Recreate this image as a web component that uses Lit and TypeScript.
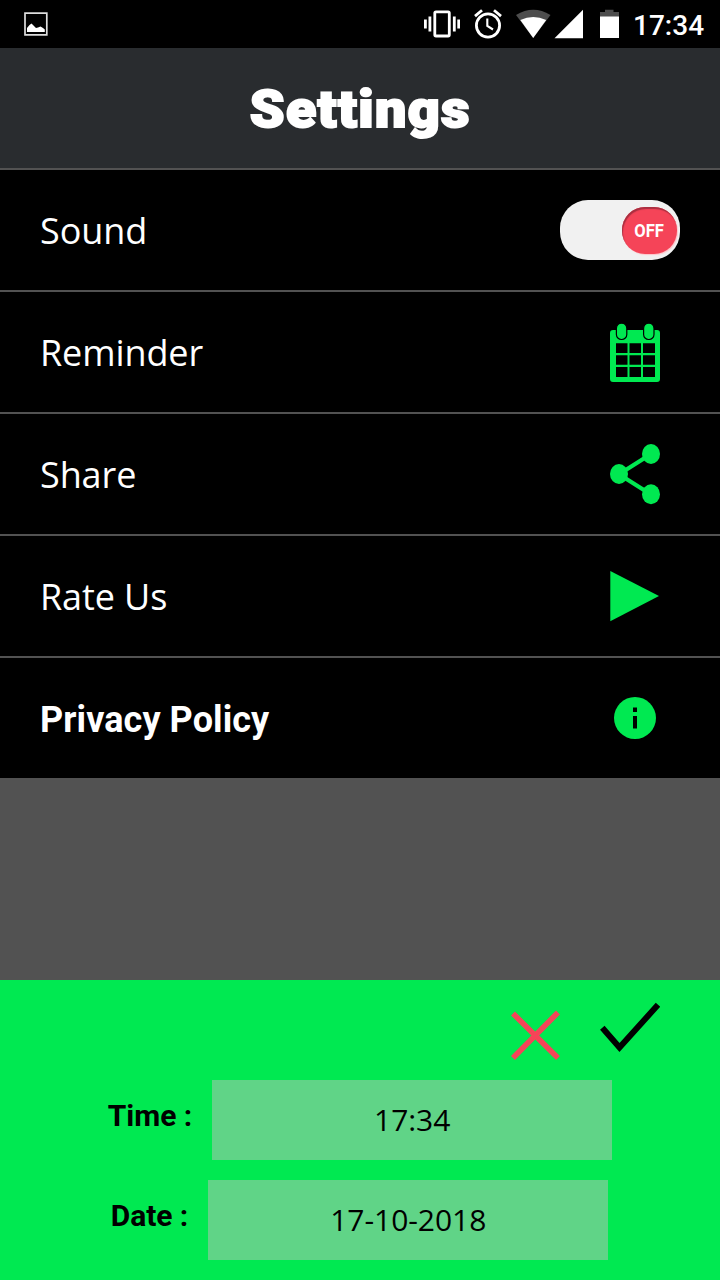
import { LitElement, html, css, svg } from "lit";
import { customElement, property } from "lit/decorators.js";

@customElement("status-bar")
class StatusBar extends LitElement {
  @property() time = "";

  static styles = css`
    :host { display: flex; height: 48px; box-sizing: border-box; padding: 0 16px 0 24px;
      background: #000; color: #fff; justify-content: space-between; }
    svg { display: block; height: 48px; }
    .right { display: flex; }
    .vibrate { margin-right: 14px; }
    .alarm { margin-right: 14px; }
    .wifi { margin-right: 3px; }
    .signal { margin-right: 15px; }
    .battery { margin-right: 14px; }
    .time { font: 500 28px/51px Roboto, sans-serif; width: 71px; white-space: nowrap; }
  `;

  render() {
    return html`
      <svg width="24" viewBox="0 0 24 48">
        <path d="M1 13.1H22.8V34.8H1Z" fill="none" stroke="#ddd" stroke-width="1.7" />
        <path d="M3 32V28L5.5 25L7.5 23.5L9.5 25.5L12 28L14 27.5L16.5 26.5L19 28L20.8 29.5V32Z" fill="#fff" />
      </svg>
      <div class="right">
        <svg class="vibrate" width="36" viewBox="0 0 36 48" fill="none" stroke="#fff">
          <rect x="10.8" y="11.8" width="14.5" height="24.2" rx="1.2" stroke-width="2.8" />
          <path d="M1.4 19.5V28.5M5.9 16.5V31.5M30.3 16.5V31.5M34.7 19.5V28.5" stroke-width="2.8" />
        </svg>
        <svg class="alarm" width="28" viewBox="0 0 28 48" fill="none" stroke="#fff">
          <circle cx="14" cy="25.5" r="11.6" stroke-width="2.8" />
          <path d="M13.3 18.5V26L19 29.5" stroke-width="2.1" />
          <path d="M1 16.1L8 10.2M20 10.2L27 16.1" stroke-width="2.8" />
        </svg>
        <svg class="wifi" width="35" viewBox="0 0 35 48">
          <path d="M0 15Q17.2 4.5 34.5 15L17.2 38Z" fill="#4d4d4d" />
          <path d="M4.3 20Q17.2 14.2 30.2 20L17.2 38Z" fill="#fff" />
        </svg>
        <svg class="signal" width="30" viewBox="0 0 30 48"><path d="M.5 38.2H29V9.7Z" fill="#fff" /></svg>
        <svg class="battery" width="20" viewBox="0 0 20 48">
          <path d="M1 12H6V9.7H14.5V12H20V17H1Z" fill="#4d4d4d" />
          <path d="M1 16.5H20V38H1Z" fill="#fff" />
        </svg>
        <div class="time">${this.time}</div>
      </div>
    `;
  }
}

@customElement("off-switch")
class OffSwitch extends LitElement {
  static styles = css`
    :host { display: flex; box-sizing: border-box; width: 120px; height: 60px; border-radius: 28px;
      background: #f1f1f1; justify-content: flex-end; align-items: center; padding-right: 3px; }
    .knob { width: 55px; height: 47px; border-radius: 23px; background: #f54458; color: #fff;
      box-sizing: border-box; box-shadow: inset 1px 2px 1px #a92f40, 1px 1px 1px #ffc4c9;
      font: 700 18px/48px Roboto, sans-serif; text-align: center; }
    .label { display: inline-block; transform: scaleX(0.92); }
  `;
  render() {
    return html`<div class="knob"><span class="label">OFF</span></div>`;
  }
}

const icons = {
  calendar: svg`
    <path fill="#00e951" fill-rule="evenodd" d="M3 16H47Q50 16 50 19V65Q50 68 47 68H3Q0 68 0 65V19Q0 16 3 16Z
      M6 29.3V39H17.5V29.3Z M19.5 29.3V39H31V29.3Z M33 29.3V39H45V29.3Z
      M6 41.2V50.8H17.5V41.2Z M19.5 41.2V50.8H31V41.2Z M33 41.2V50.8H45V41.2Z
      M6 53V63H17.5V53Z M19.5 53V63H31V53Z M33 53V63H45V53Z" />
    <g fill="#00e951" stroke="#000" stroke-width="1.2">
      <rect x="6.4" y="9.2" width="10.4" height="16.3" rx="5" />
      <rect x="33.6" y="9.2" width="10.4" height="16.3" rx="5" />
    </g>`,
  share: svg`
    <path d="M41 18L9 38.3L41 58.6" fill="none" stroke="#00e951" stroke-width="4.2" />
    <g fill="#00e951">
      <ellipse cx="9" cy="38" rx="9" ry="10" /><ellipse cx="41" cy="18" rx="9" ry="10" />
      <ellipse cx="41" cy="58.3" rx="9" ry="10" />
    </g>`,
  play: svg`<path d="M.3 13L49 38L.3 63.3Z" fill="#00e951" />`,
  info: svg`
    <circle cx="25" cy="38" r="21" fill="#00e951" />
    <path d="M23 27.5H27V32H23ZM23 36H27V48.5H23Z" fill="#000" />`,
};

@customElement("setting-row")
class SettingRow extends LitElement {
  @property() label = "";
  @property() icon = "";

  static styles = css`
    :host { display: flex; height: 120px; box-sizing: border-box; padding: 0 40px;
      background: #000; color: #fff; align-items: center; justify-content: space-between; }
    .label { font: 36px/50px "Open Sans", "Noto Sans", sans-serif; padding-top: 2px; white-space: nowrap;
      letter-spacing: -0.1px; }
    .bold { font: 700 36px/50px Roboto, sans-serif; padding-top: 4px; letter-spacing: 0.08px; }
    svg { display: block; width: 50px; height: 76px; margin-right: 20px; }
  `;
  render() {
    return html`
      <span class="label ${this.icon === "info" ? "bold" : ""}">${this.label}</span>
      ${this.icon === "switch"
        ? html`<off-switch></off-switch>`
        : html`<svg viewBox="0 0 50 76">${icons[this.icon]}</svg>`}
    `;
  }
}

@customElement("reminder-panel")
class ReminderPanel extends LitElement {
  @property() time = "";
  @property() date = "";

  static styles = css`
    :host { display: flex; flex-direction: column; height: 300px; background: #00e951; color: #000; }
    .actions { height: 100px; display: flex; justify-content: flex-end; padding-right: 60px; gap: 40px; }
    .actions svg { display: block; height: 100px; }
    .field { display: flex; justify-content: center; gap: 20px; height: 80px; margin-bottom: 20px; }
    .date { padding-right: 1px; }
    .name { font: 700 30px/72px Roboto, sans-serif; white-space: pre; letter-spacing: -0.05px; }
    .value { width: 400px; background: #60d487; text-align: center;
      font: 30px/80px "Open Sans", "Noto Sans", sans-serif; letter-spacing: -0.05px; }
  `;
  render() {
    return html`
      <div class="actions">
        <svg width="50" viewBox="0 0 50 100">
          <path d="M3 33.5L48 78M48 32.5L3 78" stroke="#f54458" stroke-width="5.6" />
        </svg>
        <svg width="60" viewBox="0 0 60 100">
          <path d="M2.3 47.8L19.5 67.5L58 24.8" fill="none" stroke="#000" stroke-width="6" />
        </svg>
      </div>
      <div class="field"><span class="name">Time :</span><div class="value">${this.time}</div></div>
      <div class="field date"><span class="name">Date :</span><div class="value">${this.date}</div></div>
    `;
  }
}

@customElement("app-root")
class AppRoot extends LitElement {
  static styles = css`
    :host { display: flex; flex-direction: column; height: 1280px; background: #525252; overflow: hidden; }
    .title { margin: 0; height: 120px; background: #292c2f; color: #fff; text-align: center;
      font: 900 51.5px/123px Roboto, sans-serif; letter-spacing: 1.2px; -webkit-text-stroke: 2px #fff; }
    .title span { display: inline-block; transform: scaleX(1.08); }
    .rows { display: flex; flex-direction: column; gap: 2px; padding-top: 2px; flex: 1; }
  `;
  render() {
    return html`
      <status-bar time="17:34"></status-bar>
      <h1 class="title"><span>Settings</span></h1>
      <div class="rows">
        <setting-row label="Sound" icon="switch"></setting-row>
        <setting-row label="Reminder" icon="calendar"></setting-row>
        <setting-row label="Share" icon="share"></setting-row>
        <setting-row label="Rate Us" icon="play"></setting-row>
        <setting-row label="Privacy Policy" icon="info"></setting-row>
      </div>
      <reminder-panel time="17:34" date="17-10-2018"></reminder-panel>
    `;
  }
}
